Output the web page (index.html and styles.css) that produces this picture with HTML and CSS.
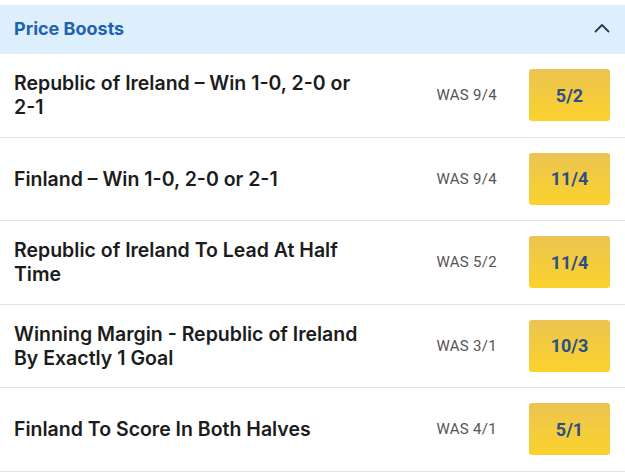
FILE: index.html
```html
<!DOCTYPE html>
<html>
<head>
<meta charset="utf-8">
<link rel="stylesheet" href="styles.css">
</head>
<body>
<div class="panel">
  <div class="header">
    <span class="title">Price Boosts</span>
    <svg class="chev" width="16" height="10" viewBox="0 0 16 10"><path d="M1.5 8.5 L8 2 L14.5 8.5" fill="none" stroke="#2b3a55" stroke-width="1.8" stroke-linecap="round" stroke-linejoin="round"/></svg>
  </div>
  <div class="row">
    <div class="name">Republic of Ireland – Win 1-0, 2-0 or 2-1</div>
    <div class="was">WAS 9/4</div>
    <div class="odds">5/2</div>
  </div>
  <div class="row">
    <div class="name">Finland – Win 1-0, 2-0 or 2-1</div>
    <div class="was">WAS 9/4</div>
    <div class="odds">11/4</div>
  </div>
  <div class="row">
    <div class="name">Republic of Ireland To Lead At Half Time</div>
    <div class="was">WAS 5/2</div>
    <div class="odds">11/4</div>
  </div>
  <div class="row">
    <div class="name">Winning Margin - Republic of Ireland By Exactly 1 Goal</div>
    <div class="was">WAS 3/1</div>
    <div class="odds">10/3</div>
  </div>
  <div class="row">
    <div class="name">Finland To Score In Both Halves</div>
    <div class="was">WAS 4/1</div>
    <div class="odds">5/1</div>
  </div>
</div>
</body>
</html>
```
FILE: styles.css
```css
html, body {
  margin: 0;
  padding: 0;
  background: #ffffff;
}
body {
  width: 625px;
  height: 476px;
  overflow: hidden;
  font-family: Inter, "Noto Sans", sans-serif;
}
.panel {
  padding-top: 5px;
}
.header {
  box-sizing: border-box;
  height: 49px;
  background: #ddeffc;
  display: flex;
  align-items: center;
  justify-content: space-between;
  padding: 0 15px 3px 14px;
}
.title {
  color: #1f63b0;
  font-size: 18px;
  font-weight: 700;
}
.chev {
  margin-top: 0;
}
.row {
  box-sizing: border-box;
  height: 83.5px;
  border-bottom: 1px solid #e4e4e4;
  display: flex;
  align-items: center;
  padding: 0 15px 0 14px;
}
.name {
  flex: 0 0 360px;
  font-size: 19.5px;
  font-weight: 600;
  line-height: 24px;
  color: #1c1c1c;
}
.was {
  flex: 1;
  text-align: right;
  padding-right: 32px;
  font-family: Roboto, "Liberation Sans", sans-serif;
  font-size: 15px;
  letter-spacing: 0.3px;
  color: #555555;
}
.odds {
  width: 81px;
  height: 52px;
  border-radius: 3px;
  background: linear-gradient(180deg, #ebc451 0%, #fbd22c 100%);
  display: flex;
  align-items: center;
  justify-content: center;
  font-family: Roboto, "Liberation Sans", sans-serif;
  font-weight: 700;
  font-size: 18px;
  color: #2c4f85;
}
```
